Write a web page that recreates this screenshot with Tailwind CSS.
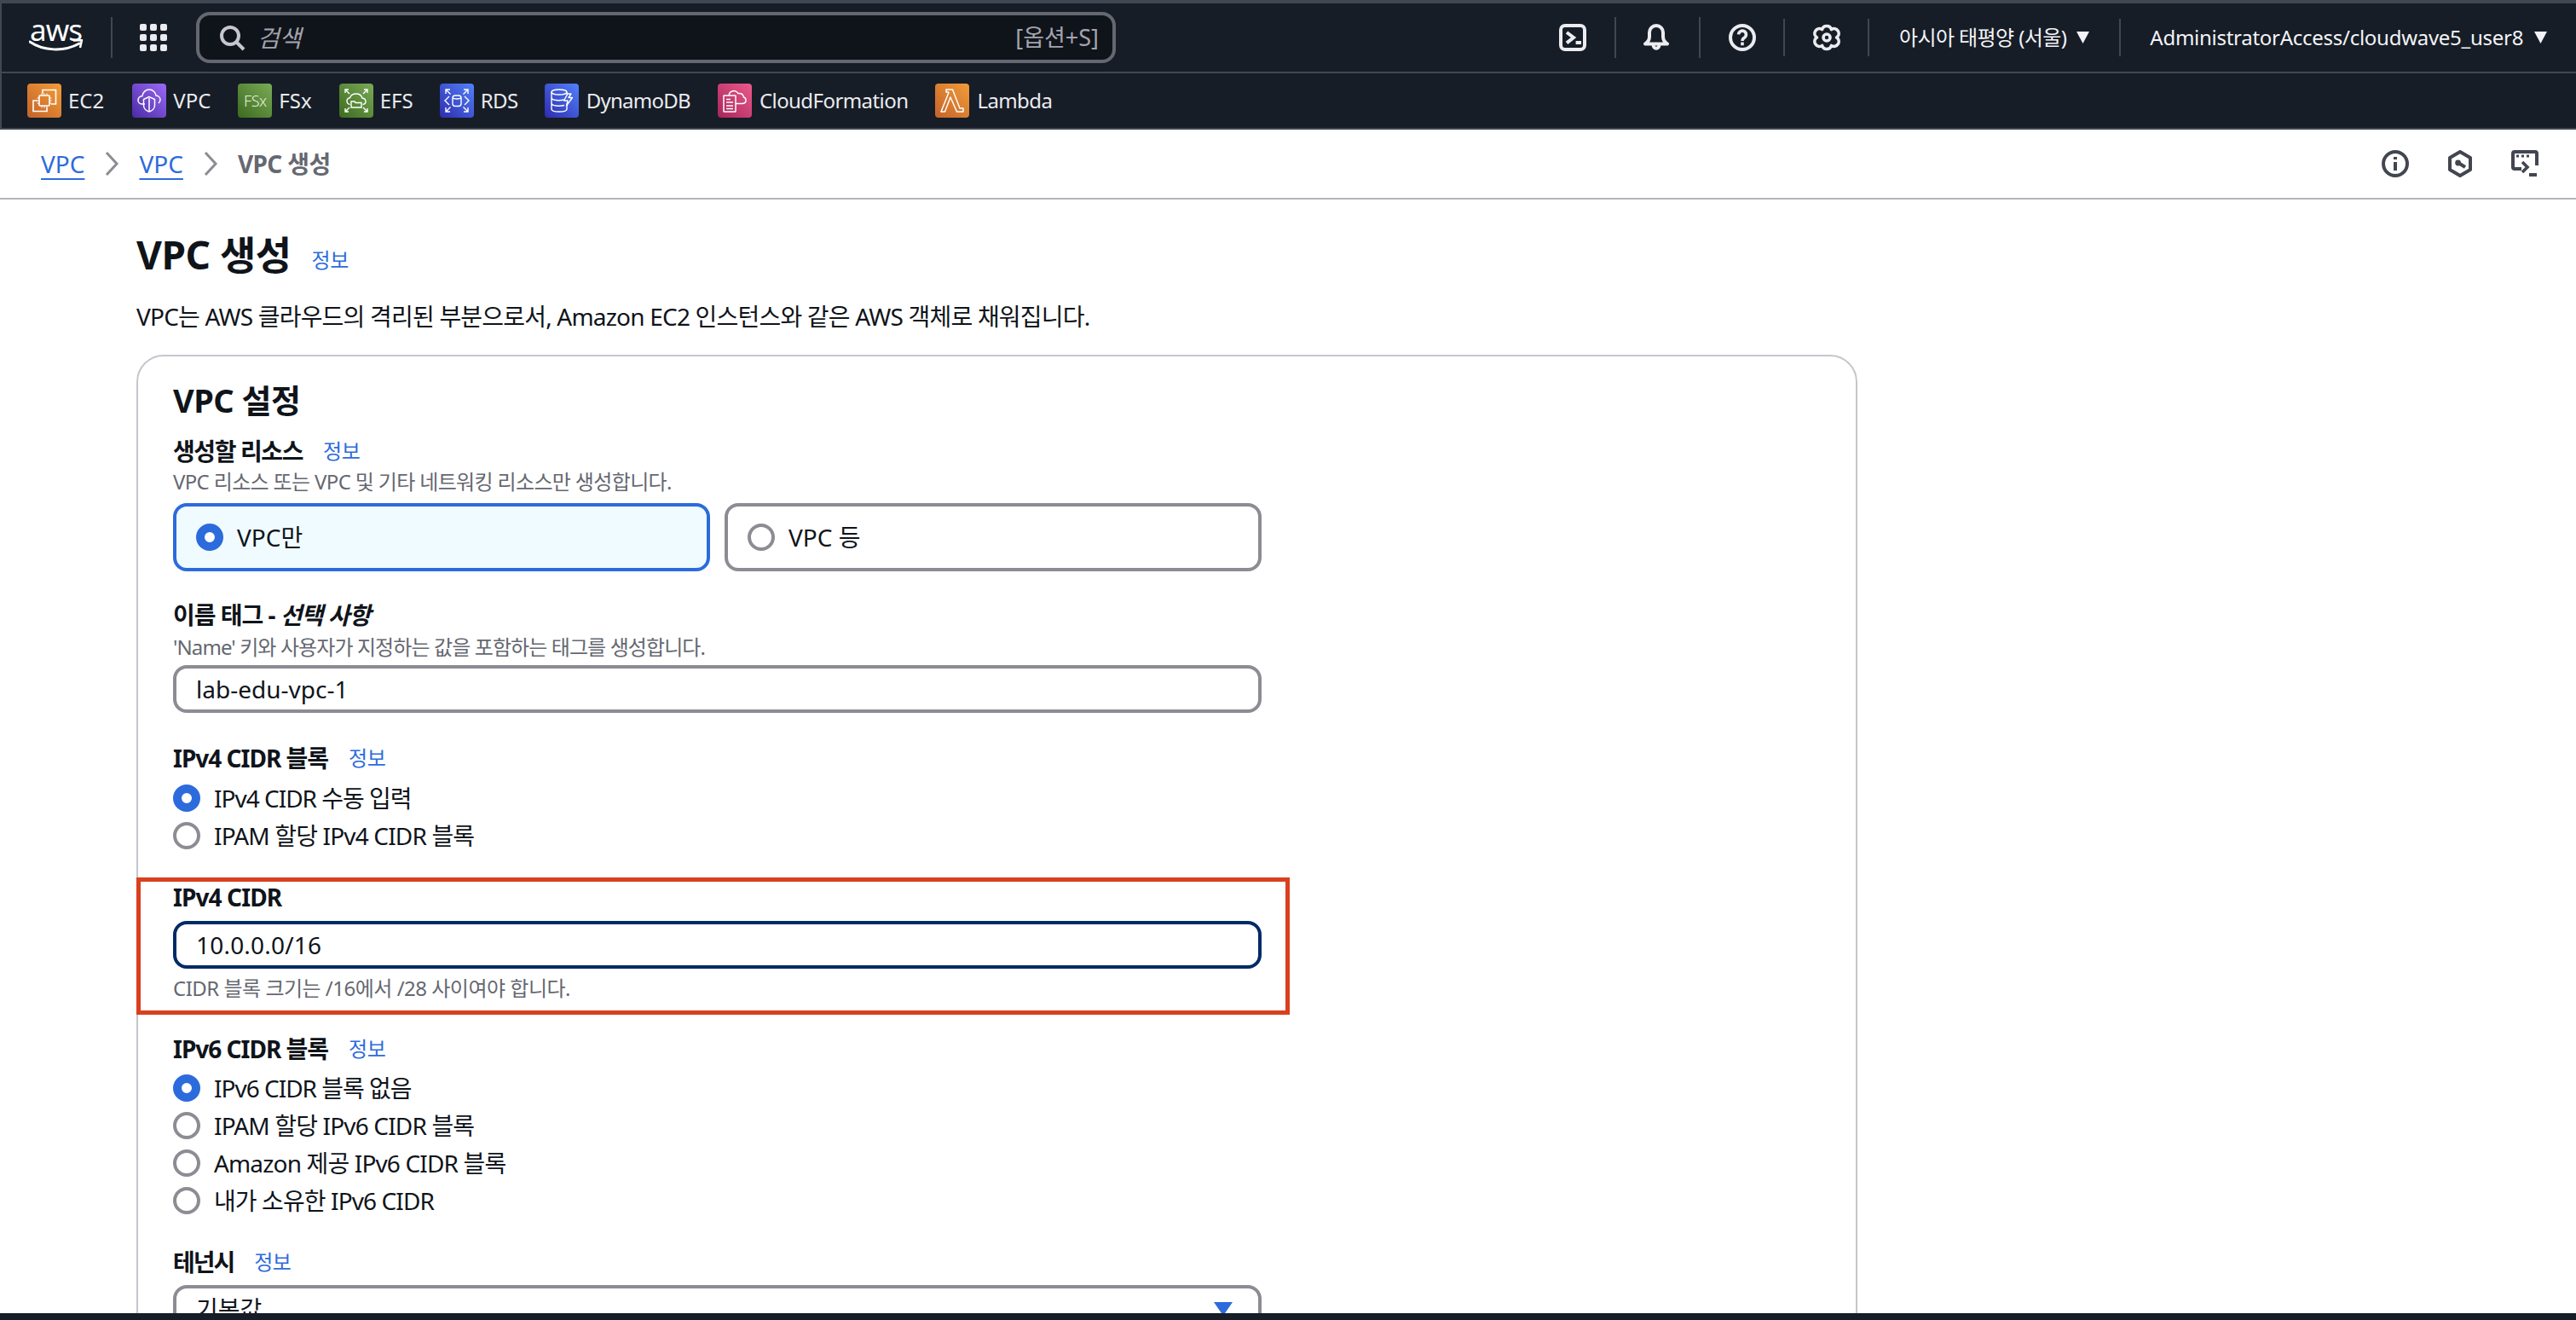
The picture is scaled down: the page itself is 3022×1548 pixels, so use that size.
<!DOCTYPE html>
<html lang="ko">
<head>
    <meta charset="UTF-8">
    <title>VPC 생성</title>
    <script src="https://cdn.jsdelivr.net/npm/@tailwindcss/browser@4"></script>
</head>
<body class="w-[3022px] h-[1548px] overflow-hidden bg-white flex flex-col text-[#0f141a] [font-family:'Noto_Sans','Noto_Sans_CJK_KR',sans-serif]">
    <!-- Top navigation -->
    <header class="shrink-0 bg-[#161d26] border-l-2 border-t-4 border-[#414750] text-[#f3f3f7]">
        <nav class="h-[80px] flex items-center pl-[32px]">
            <div class="w-[63px] h-[44px] relative shrink-0">
                <span class="absolute left-[1px] top-[-9px] text-[35px] leading-[44px] tracking-[-1px] text-white">aws</span>
                <svg class="absolute left-0 top-[24px]" width="64" height="16" viewBox="0 0 64 16" fill="none">
                    <path d="M1 3c16 11 40 12 58 2" stroke="#fff" stroke-width="3" stroke-linecap="round"/>
                    <path d="M52 1.500l10-.5-2 9" stroke="#fff" stroke-width="2.500" stroke-linejoin="round"/>
                </svg>
            </div>
            <div class="ml-[33px] w-[2px] h-[48px] bg-[#414750]"></div>
            <div class="ml-[32px] grid grid-cols-3 gap-1 w-[32px]">
                <div class="w-2 h-2 rounded-[2px] bg-[#ebebf0]"></div>
                <div class="w-2 h-2 rounded-[2px] bg-[#ebebf0]"></div>
                <div class="w-2 h-2 rounded-[2px] bg-[#ebebf0]"></div>
                <div class="w-2 h-2 rounded-[2px] bg-[#ebebf0]"></div>
                <div class="w-2 h-2 rounded-[2px] bg-[#ebebf0]"></div>
                <div class="w-2 h-2 rounded-[2px] bg-[#ebebf0]"></div>
                <div class="w-2 h-2 rounded-[2px] bg-[#ebebf0]"></div>
                <div class="w-2 h-2 rounded-[2px] bg-[#ebebf0]"></div>
                <div class="w-2 h-2 rounded-[2px] bg-[#ebebf0]"></div>
            </div>
            <div class="ml-[34px] w-[1079px] h-[60px] rounded-[16px] border-4 border-[#656871] bg-[#0f141a] flex items-center pl-[22px] pr-[16px]">
                <svg width="32" height="32" viewBox="0 0 16 16" fill="none" stroke="#c6c6cd" stroke-width="2"><circle cx="7" cy="7" r="5"/><path d="m10.500 10.500 4.500 4.500"/></svg>
                <span class="ml-[14px] text-[28px] leading-[40px] italic text-[#a4a4ad]">검색</span>
                <span class="ml-auto text-[27px] leading-[40px] text-[#a4a4ad]">[옵션+S]</span>
            </div>
            <svg class="ml-[520px]" width="32" height="32" viewBox="0 0 16 16" fill="none" stroke="#ebebf0" stroke-width="2"><rect x="1" y="1" width="14" height="14" rx="2.500"/><path d="M4.500 5 8.500 8l-4 3.200M9.800 11H13"/></svg>
            <div class="ml-[33px] w-[2px] h-[48px] bg-[#414750]"></div>
            <svg class="ml-[31px]" width="32" height="32" viewBox="0 0 16 16" fill="none" stroke="#ebebf0" stroke-width="2" stroke-linejoin="round"><path d="M1.500 11.700c1.700-1 2.500-2.500 2.500-4.200V5a4 4 0 0 1 8 0v2.500c0 1.700.8 3.200 2.500 4.200z"/><path d="M6.300 12.500a1.700 1.900 0 0 0 3.400 0"/></svg>
            <div class="ml-[34px] w-[2px] h-[48px] bg-[#414750]"></div>
            <svg class="ml-[33px]" width="32" height="32" viewBox="0 0 16 16" fill="none" stroke="#ebebf0" stroke-width="2"><circle cx="8" cy="8" r="7"/><path d="M5.800 6.200a2.200 2.200 0 1 1 3.400 1.900c-.8.500-1.200 1-1.200 1.900M8 10.800v1.800" stroke-width="1.800"/></svg>
            <div class="ml-[32px] w-[2px] h-[44px] bg-[#414750]"></div>
            <svg class="ml-[33px]" width="32" height="32" viewBox="0 0 16 16" fill="none" stroke="#ebebf0" stroke-width="1.800" stroke-linejoin="round"><path d="M5.300 3.300A2.800 2.800 0 0 1 10.700 3.300 2.800 2.800 0 0 1 13.800 8 2.800 2.800 0 0 1 10.700 12.700 2.800 2.800 0 0 1 5.300 12.700 2.800 2.800 0 0 1 2.200 8 2.800 2.800 0 0 1 5.300 3.300Z"/><circle cx="8" cy="8" r="2"/></svg>
            <div class="ml-[32px] w-[2px] h-[44px] bg-[#414750]"></div>
            <span class="ml-[35px] text-[24px] leading-[36px] tracking-[-.6px] whitespace-nowrap">아시아 태평양 (서울)</span>
            <svg class="ml-[12px]" width="15" height="14" viewBox="0 0 15 14" fill="#f3f3f7"><path d="M0 0h15L7.500 14z"/></svg>
            <div class="ml-[35px] w-[2px] h-[44px] bg-[#414750]"></div>
            <span class="ml-[34px] text-[24px] leading-[36px] tracking-[-.27px] whitespace-nowrap">AdministratorAccess/cloudwave5_user8</span>
            <svg class="ml-[13px]" width="15" height="14" viewBox="0 0 15 14" fill="#f3f3f7"><path d="M0 0h15L7.500 14z"/></svg>
        </nav>

        <!-- Service shortcuts -->
        <div class="h-[66px] border-t-2 border-[#414750] flex items-center pl-[30px] text-[24px] leading-[36px] text-[#ebebf0]">
            <div class="flex items-center gap-[8px]">
                <div class="w-10 h-10 rounded bg-linear-to-tr from-[#c4622a] to-[#f29d38]">
                    <svg width="40" height="40" viewBox="0 0 40 40" fill="none" stroke="#fff" stroke-width="1.600"><path d="M12 20H7v12.500h16V28"/><path d="M18 12V7.500h15.500V24H28"/><rect x="14" y="14" width="12" height="12" rx="1"/><path d="M17 11.500V14M20 11.500V14M23 11.500V14M17 26v2.500M20 26v2.500M23 26v2.500M11.500 17H14M11.500 20H14M11.500 23H14M26 17h2.500M26 20h2.500M26 23h2.500" stroke-width="1"/></svg>
                </div>
                <span>EC2</span>
            </div>
            <div class="ml-[33px] flex items-center gap-[8px]">
                <div class="w-10 h-10 rounded bg-linear-to-tr from-[#4b2aa5] to-[#9d69f7]">
                    <svg width="40" height="40" viewBox="0 0 40 40" fill="none" stroke="#fff" stroke-width="1.500"><path d="M15 24h-3.500C8.500 24 7 21.500 7 19.500c0-3 2.300-4.800 4.800-4.800C12.500 10 16 7 20 7c4.500 0 7.500 3.500 8 7 2.800.3 5 2.500 5 5 0 1.700-.8 3-2 4"/><path d="M20 15.500 13.500 18.500v7c0 3.500 3 6.500 6.500 7.500 3.500-1 6.500-4 6.500-7.500v-7z"/><path d="M20 17v15"/></svg>
                </div>
                <span>VPC</span>
            </div>
            <div class="ml-[32px] flex items-center gap-[8px]">
                <div class="w-10 h-10 rounded bg-linear-to-tr from-[#3c6b1e] to-[#7bab57] flex items-center justify-center">
                    <span class="text-[18px] leading-[24px] text-[#e4f0d8] font-light tracking-[-.5px]">FSx</span>
                </div>
                <span>FSx</span>
            </div>
            <div class="ml-[32px] flex items-center gap-[8px]">
                <div class="w-10 h-10 rounded bg-linear-to-tr from-[#3c6b1e] to-[#7bab57]">
                    <svg width="40" height="40" viewBox="0 0 40 40" fill="none" stroke="#fff" stroke-width="1.400"><path d="M7 11V7h4M7 7l5 5M33 11V7h-4M33 7l-5 5M7 29v4h4M7 33l5-5M33 29v4h-4M33 33l-5-5"/><path d="M12.500 24.500C10 24 9 22.500 9 20.500c0-2 1.500-3.500 3.500-3.800C13.500 13.500 16.500 12 20 12c3.500 0 6 2 7 5 2 .3 4 1.700 4 4 0 2-1.500 3.300-3.500 3.500"/><path d="M14 21h4l1 1.500h7V28H14z"/></svg>
                </div>
                <span>EFS</span>
            </div>
            <div class="ml-[31px] flex items-center gap-[8px]">
                <div class="w-10 h-10 rounded bg-linear-to-tr from-[#2f2ab0] to-[#5480fa]">
                    <svg width="40" height="40" viewBox="0 0 40 40" fill="none" stroke="#fff" stroke-width="1.400"><path d="M7 12V7h5M7 7l5.500 5.500M33 12V7h-5M33 7l-5.500 5.500M7 28v5h5M7 33l5.500-5.500M33 28v5h-5M33 33l-5.500-5.500"/><path d="M11 15l-5 5 5 5M29 15l5 5-5 5"/><rect x="15" y="14" width="10" height="12.500" rx="3"/><path d="M15 17c1.500 1.300 8.500 1.300 10 0"/></svg>
                </div>
                <span class="tracking-[-.5px]">RDS</span>
            </div>
            <div class="ml-[31px] flex items-center gap-[9px]">
                <div class="w-10 h-10 rounded bg-linear-to-tr from-[#2f2ab0] to-[#5480fa]">
                    <svg width="40" height="40" viewBox="0 0 40 40" fill="none" stroke="#fff" stroke-width="1.400"><ellipse cx="17" cy="10" rx="9" ry="3"/><path d="M8 10v20c0 4 18 4 18 0v-5M8 16.500c0 3.500 10 3.800 14.500 2.500M8 23c0 3.500 10 3.800 15 2.500M26 10v3"/><path d="M27 12l-4.500 8H27l-1.500 6 7-9.500h-4.500l3-4.500z" stroke-linejoin="round"/></svg>
                </div>
                <span class="tracking-[-.75px]">DynamoDB</span>
            </div>
            <div class="ml-[32px] flex items-center gap-[9px]">
                <div class="w-10 h-10 rounded bg-linear-to-tr from-[#a8245c] to-[#ec5a8c]">
                    <svg width="40" height="40" viewBox="0 0 40 40" fill="none" stroke="#fff" stroke-width="1.500"><rect x="7" y="14" width="14" height="19" rx=".5"/><path d="M10 18.500h5M10 22h8M10 26h8M10 29.500h8"/><path d="M13 14c.5-3 2-4.500 4-5 2.500-1 5.500 0 6.800 2.500 3.700-.5 6.200 1.500 6.700 4.500 1.800.5 2.500 2 2.500 3.500 0 2.500-2 4-4.500 4H21"/></svg>
                </div>
                <span class="tracking-[-.57px]">CloudFormation</span>
            </div>
            <div class="ml-[32px] flex items-center gap-[9px]">
                <div class="w-10 h-10 rounded bg-linear-to-tr from-[#c4622a] to-[#f29d38]">
                    <svg width="40" height="40" viewBox="0 0 40 40" fill="none" stroke="#fff" stroke-width="1.500" stroke-linejoin="round"><path d="M13 7h7.500l8.500 22h4v4h-7.500L18 16 11.500 33H7l9-22.500-1-.5h-2z"/></svg>
                </div>
                <span class="tracking-[-.6px]">Lambda</span>
            </div>
        </div>
    </header>

    <!-- Breadcrumbs -->
    <div class="shrink-0 h-[84px] border-t-2 border-b-2 border-t-[#414750] border-b-[#b4b4bb] flex items-center pl-[48px] pr-[44px] text-[28px] leading-[40px]">
        <a class="text-[#2c6bdc] underline underline-offset-[6px] decoration-2">VPC</a>
        <svg class="mx-[23px]" width="18" height="30" viewBox="0 0 18 30" fill="none" stroke="#8c8c94" stroke-width="3"><path d="m3 2 12 13L3 28"/></svg>
        <a class="text-[#2c6bdc] underline underline-offset-[6px] decoration-2">VPC</a>
        <svg class="mx-[23px]" width="18" height="30" viewBox="0 0 18 30" fill="none" stroke="#8c8c94" stroke-width="3"><path d="m3 2 12 13L3 28"/></svg>
        <span class="font-bold text-[#656871] tracking-[-.6px]">VPC 생성</span>
        <div class="ml-auto flex items-center gap-[44px]">
            <svg width="32" height="32" viewBox="0 0 16 16" fill="none" stroke="#424650" stroke-width="2"><circle cx="8" cy="8" r="7"/><path d="M8 7v5M8 4v1.500"/></svg>
            <svg width="32" height="32" viewBox="0 0 16 16" fill="none" stroke="#424650" stroke-width="2" stroke-linejoin="round"><path d="M8 1l6 3.500v7L8 15l-6-3.500v-7z"/><circle cx="6.800" cy="7.500" r="1.200" fill="#424650" stroke-width="1"/><path d="m7 7.500 4 2.500"/></svg>
            <svg width="32" height="32" viewBox="0 0 16 16" fill="none" stroke="#424650" stroke-width="2"><path d="M6 11H2a1 1 0 0 1-1-1V2a1 1 0 0 1 1-1h12a1 1 0 0 1 1 1v7"/><path d="M3 3.500h1.500M6 3.500h1.500M9 3.500h1.500" stroke-width="1.500"/><path d="m6.500 7 3 3-3 3" stroke-width="1.800"/><path d="M10.500 14.500H15" stroke-width="2"/></svg>
        </div>
    </div>

    <!-- Page content -->
    <main class="flex-1 min-h-0 overflow-hidden pl-[160px] pt-[36px]">
        <div class="flex items-center h-[56px]">
            <h1 class="text-[46px] leading-[56px] font-bold tracking-[-.5px]">VPC 생성</h1>
            <a class="ml-[24px] mt-[14px] text-[24px] leading-[36px] tracking-[-.5px] text-[#2c6bdc]">정보</a>
        </div>
        <p class="mt-[25px] text-[28px] leading-[40px] tracking-[-.8px]">VPC는 AWS 클라우드의 격리된 부분으로서, Amazon EC2 인스턴스와 같은 AWS 객체로 채워집니다.</p>

        <section class="mt-[25px] w-[2019px] border-2 border-[#c6c6cd] rounded-[32px] pl-[41px] pt-[27px] h-[1200px]">
            <h2 class="text-[38px] leading-[48px] font-bold tracking-[-.5px]">VPC 설정</h2>

            <div class="mt-[18px] flex items-center h-[36px]">
                <span class="text-[28px] leading-[36px] font-bold tracking-[-1.4px]">생성할 리소스</span>
                <a class="ml-[24px] text-[24px] leading-[36px] tracking-[-.5px] text-[#2c6bdc]">정보</a>
            </div>
            <p class="mt-[2px] text-[24px] leading-[32px] tracking-[-.65px] text-[#656871]">VPC 리소스 또는 VPC 및 기타 네트워킹 리소스만 생성합니다.</p>
            <div class="mt-[9px] flex gap-[17px]">
                <div class="w-[630px] h-[80px] rounded-[16px] border-4 border-[#2c6bdc] bg-[#f0fbff] flex items-center pl-[23px] gap-[16px]">
                    <div class="w-8 h-8 rounded-full bg-white border-[10px] border-[#2c6bdc]"></div>
                    <span class="text-[28px] leading-[40px]">VPC만</span>
                </div>
                <div class="w-[630px] h-[80px] rounded-[16px] border-4 border-[#8c8c94] flex items-center pl-[23px] gap-[16px]">
                    <div class="w-8 h-8 rounded-full bg-white border-4 border-[#8c8c94]"></div>
                    <span class="text-[28px] leading-[40px]">VPC 등</span>
                </div>
            </div>

            <div class="mt-[33px] text-[28px] leading-[36px] font-bold tracking-[-1px]">이름 태그 - <i>선택 사항</i></div>
            <p class="mt-[4px] text-[24px] leading-[32px] tracking-[-.9px] text-[#656871]">'Name' 키와 사용자가 지정하는 값을 포함하는 태그를 생성합니다.</p>
            <div class="mt-[5px] w-[1277px] h-[56px] rounded-[16px] border-4 border-[#8c8c94] flex items-center pl-[23px] text-[28px]">lab-edu-vpc-1</div>

            <div class="mt-[35px] flex items-center h-[36px]">
                <span class="text-[28px] leading-[36px] font-bold tracking-[-1px]">IPv4 CIDR 블록</span>
                <a class="ml-[24px] text-[24px] leading-[36px] tracking-[-.5px] text-[#2c6bdc]">정보</a>
            </div>
            <div class="mt-[7px]">
                <div class="h-[44px] flex items-center gap-[16px]">
                    <div class="w-8 h-8 rounded-full bg-white border-[10px] border-[#2c6bdc]"></div>
                    <span class="text-[28px] leading-[40px] tracking-[-1px]">IPv4 CIDR 수동 입력</span>
                </div>
                <div class="h-[44px] flex items-center gap-[16px]">
                    <div class="w-8 h-8 rounded-full bg-white border-4 border-[#8c8c94]"></div>
                    <span class="text-[28px] leading-[40px] tracking-[-.85px]">IPAM 할당 IPv4 CIDR 블록</span>
                </div>
            </div>

            <div class="relative mt-[32px]">
                <div class="text-[28px] leading-[36px] font-bold tracking-[-.9px]">IPv4 CIDR</div>
                <div class="mt-[10px] w-[1277px] h-[56px] rounded-[16px] border-4 border-[#002b66] flex items-center pl-[23px] text-[28px] tracking-[.2px]">10.0.0.0/16</div>
                <p class="mt-[7px] text-[24px] leading-[32px] tracking-[-.5px] text-[#656871]">CIDR 블록 크기는 /16에서 /28 사이여야 합니다.</p>
                <div class="absolute left-[-43px] top-[-5px] w-[1353px] h-[161px] border-[5px] border-[#d8401f]"></div>
            </div>

            <div class="mt-[37px] flex items-center h-[36px]">
                <span class="text-[28px] leading-[36px] font-bold tracking-[-1px]">IPv6 CIDR 블록</span>
                <a class="ml-[24px] text-[24px] leading-[36px] tracking-[-.5px] text-[#2c6bdc]">정보</a>
            </div>
            <div class="mt-[6px]">
                <div class="h-[44px] flex items-center gap-[16px]">
                    <div class="w-8 h-8 rounded-full bg-white border-[10px] border-[#2c6bdc]"></div>
                    <span class="text-[28px] leading-[40px] tracking-[-1px]">IPv6 CIDR 블록 없음</span>
                </div>
                <div class="h-[44px] flex items-center gap-[16px]">
                    <div class="w-8 h-8 rounded-full bg-white border-4 border-[#8c8c94]"></div>
                    <span class="text-[28px] leading-[40px] tracking-[-.85px]">IPAM 할당 IPv6 CIDR 블록</span>
                </div>
                <div class="h-[44px] flex items-center gap-[16px]">
                    <div class="w-8 h-8 rounded-full bg-white border-4 border-[#8c8c94]"></div>
                    <span class="text-[28px] leading-[40px] tracking-[-.85px]">Amazon 제공 IPv6 CIDR 블록</span>
                </div>
                <div class="h-[44px] flex items-center gap-[16px]">
                    <div class="w-8 h-8 rounded-full bg-white border-4 border-[#8c8c94]"></div>
                    <span class="text-[28px] leading-[40px] tracking-[-.9px]">내가 소유한 IPv6 CIDR</span>
                </div>
            </div>

            <div class="mt-[32px] flex items-center h-[36px]">
                <span class="text-[28px] leading-[36px] font-bold tracking-[-2px]">테넌시</span>
                <a class="ml-[24px] text-[24px] leading-[36px] tracking-[-.5px] text-[#2c6bdc]">정보</a>
            </div>
            <div class="mt-[9px] w-[1277px] h-[56px] rounded-[16px] border-4 border-[#8c8c94] flex items-center justify-between pl-[23px] pr-[30px] text-[28px]">
                <span>기본값</span>
                <svg width="22" height="16" viewBox="0 0 22 16" fill="#2c6bdc"><path d="M0 0h22L11 16z"/></svg>
            </div>
        </section>
    </main>

    <!-- Bottom bar -->
    <footer class="shrink-0 h-[8px] bg-[#161d26]"></footer>
</body>
</html>
